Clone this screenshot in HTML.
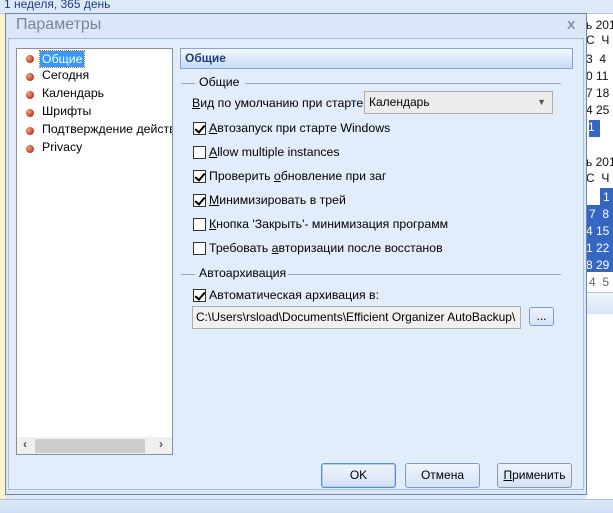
<!DOCTYPE html>
<html><head><meta charset="utf-8"><style>
*{margin:0;padding:0;box-sizing:border-box}
body{width:613px;height:513px;overflow:hidden;position:relative;background:#dce8f7;font-family:"Liberation Sans","Noto Sans CJK SC",sans-serif;font-size:12px;color:#000}
.a{position:absolute}
.cb{position:absolute;width:13px;height:13px;border:1px solid #333;background:#fff}
.cb.c::after{content:"";position:absolute;left:3px;top:0px;width:4px;height:8px;border:solid #000;border-width:0 2px 2px 0;transform:rotate(40deg)}
.lbl{position:absolute;font-size:12.3px;white-space:nowrap}
.dot{position:absolute;width:8px;height:8px;border-radius:50%;background:radial-gradient(circle at 35% 35%,#f4a080,#c8452a 60%,#8a2a18)}
.btn{position:absolute;height:25px;border:1px solid #7a9cc4;border-radius:3px;background:linear-gradient(#eef4fc,#d4e2f4);text-align:center;line-height:23px;font-size:12px}
.cal{position:absolute;font-size:12px;color:#111;white-space:nowrap}
</style></head><body>
<div class="a" style="left:0;top:0;width:613px;height:14px;background:#dde9f8;border-bottom:1px solid #b7cbe6"></div>
<div class="a" style="left:4px;top:-3px;font-size:12px;color:#1e3f7a">1 неделя, 365 день</div>
<div class="a" style="left:0;top:14px;width:6px;height:485px;background:#fdf3cc"></div>
<div class="a" style="left:586px;top:14px;width:27px;height:485px;background:#fff"></div>
<div class="a" style="left:589px;top:120px;width:11px;height:17px;background:#3566c2"></div>
<div class="cal" style="left:586px;top:18px">ь 201</div>
<div class="cal" style="left:586px;top:33px">С&nbsp;&nbsp;Ч</div>
<div class="cal" style="left:586px;top:52px">3&nbsp;&nbsp;4</div>
<div class="cal" style="left:586px;top:69px">0 11</div>
<div class="cal" style="left:586px;top:86px">7 18</div>
<div class="cal" style="left:586px;top:103px">4 25</div>
<div class="cal" style="left:588px;top:120px;color:#fff">1</div>
<div class="cal" style="left:586px;top:155px">ь 201</div>
<div class="cal" style="left:586px;top:171px">С&nbsp;&nbsp;Ч</div>
<div class="a" style="left:586px;top:188px;width:27px;height:84px;background:#3566c2"></div>
<div class="a" style="left:586px;top:188px;width:14px;height:17px;background:#fff"></div>
<div class="cal" style="left:603px;top:190px;color:#fff">1</div>
<div class="cal" style="left:589px;top:207px;color:#fff">7&nbsp;&nbsp;8</div>
<div class="cal" style="left:586px;top:224px;color:#fff">4 15</div>
<div class="cal" style="left:586px;top:241px;color:#fff">1 22</div>
<div class="cal" style="left:586px;top:258px;color:#fff">8 29</div>
<div class="cal" style="left:589px;top:275px;color:#666">4&nbsp;&nbsp;5</div>
<div class="a" style="left:586px;top:292px;width:27px;height:22px;background:linear-gradient(#f0f5fc,#d6e4f5);border-top:1px solid #b0c4e0"></div>
<div class="a" style="left:0;top:499px;width:613px;height:14px;background:linear-gradient(#dce8f7,#cfdef3);border-top:1px solid #a9bfdd"></div>

<div class="a" style="left:5px;top:13px;width:582px;height:482px;background:#dbe7f8;border:1px solid #6f88a8"></div>
<div class="a" style="left:16px;top:16px;font-size:16px;color:#7b8596">Параметры</div>
<div class="a" style="left:567px;top:16px;font-size:15px;color:#8a94a4;font-weight:bold">x</div>
<div class="a" style="left:8px;top:38px;width:576px;height:452px;background:#e1edfb;border:1px solid #a6bfdf"></div>

<div class="a" style="left:16px;top:48px;width:157px;height:407px;background:#fff;border:1px solid #8a8f96"></div>
<div class="a" style="left:17px;top:437px;width:155px;height:17px;background:#f0f0f0"></div>
<div class="a" style="left:35px;top:439px;width:110px;height:14px;background:#cdcdcd"></div>
<div class="a" style="left:23px;top:437px;font-size:12px;color:#555;font-weight:bold">‹</div>
<div class="a" style="left:159px;top:437px;font-size:12px;color:#555;font-weight:bold">›</div>
<div class="dot" style="left:26px;top:55px"></div>
<div class="a" style="left:40px;top:51px;height:16px;padding:0 2px;background:#3399ff;color:#fff;outline:1px dotted #c07010;line-height:16px;font-size:12.3px">Общие</div>
<div class="dot" style="left:26px;top:73px"></div><div class="lbl" style="left:42px;top:68px">Сегодня</div>
<div class="dot" style="left:26px;top:91px"></div><div class="lbl" style="left:42px;top:86px">Календарь</div>
<div class="dot" style="left:26px;top:109px"></div><div class="lbl" style="left:42px;top:104px">Шрифты</div>
<div class="dot" style="left:26px;top:127px"></div><div class="lbl" style="left:42px;top:122px;width:130px;overflow:hidden">Подтверждение действий</div>
<div class="dot" style="left:26px;top:145px"></div><div class="lbl" style="left:42px;top:140px">Privacy</div>

<div class="a" style="left:180px;top:48px;width:393px;height:21px;border:1px solid #7fa7d9;background:linear-gradient(#f4f8fe,#c6dbf5);font-weight:bold;color:#1b3f7a;line-height:19px;padding-left:4px;font-size:12px">Общие</div>

<div class="a" style="left:181px;top:83px;width:14px;border-top:1px solid #a0a8b4"></div>
<div class="lbl" style="left:199px;top:75px">Общие</div>
<div class="a" style="left:245px;top:83px;width:316px;border-top:1px solid #a0a8b4"></div>
<div class="lbl" style="left:192px;top:96px"><u>В</u>ид по умолчанию при старте</div>
<div class="a" style="left:364px;top:91px;width:189px;height:23px;background:#ececec;border:1px solid #adadad;padding-left:4px;line-height:21px">Календарь<span style="position:absolute;right:6px;top:0;font-size:9px;color:#555">▼</span></div>
<div class="cb c" style="left:193px;top:122px"></div><div class="lbl" style="left:209px;top:121px"><u>А</u>втозапуск при старте Windows</div>
<div class="cb" style="left:193px;top:146px"></div><div class="lbl" style="left:209px;top:145px"><u>A</u>llow multiple instances</div>
<div class="cb c" style="left:193px;top:170px"></div><div class="lbl" style="left:209px;top:169px">Проверить <u>о</u>бновление при заг</div>
<div class="cb c" style="left:193px;top:194px"></div><div class="lbl" style="left:209px;top:193px"><u>М</u>инимизировать в трей</div>
<div class="cb" style="left:193px;top:218px"></div><div class="lbl" style="left:209px;top:217px"><u>К</u>нопка 'Закрыть'- минимизация программ</div>
<div class="cb" style="left:193px;top:242px"></div><div class="lbl" style="left:209px;top:241px">Требовать <u>а</u>вторизации после восстанов</div>
<div class="a" style="left:181px;top:274px;width:14px;border-top:1px solid #a0a8b4"></div>
<div class="lbl" style="left:199px;top:266px">Автоархивация</div>
<div class="a" style="left:288px;top:274px;width:273px;border-top:1px solid #a0a8b4"></div>
<div class="cb c" style="left:193px;top:289px"></div><div class="lbl" style="left:209px;top:288px">Автоматическая архивация в:</div>
<div class="a" style="left:192px;top:306px;width:329px;height:23px;background:#f0f0f0;border:1px solid #adadad;padding-left:3px;line-height:21px;white-space:nowrap;overflow:hidden">C:\Users\rsload\Documents\Efficient Organizer AutoBackup\</div>
<div class="btn" style="left:529px;top:307px;width:25px;height:19px;line-height:17px">...</div>

<div class="btn" style="left:321px;top:463px;width:75px;border-color:#5a8ed0;box-shadow:inset 0 0 0 1px #a8d0f4">OK</div>
<div class="btn" style="left:405px;top:463px;width:75px">Отмена</div>
<div class="btn" style="left:497px;top:463px;width:75px;border-color:#8a9bb0"><u>П</u>рименить</div>
</body></html>
